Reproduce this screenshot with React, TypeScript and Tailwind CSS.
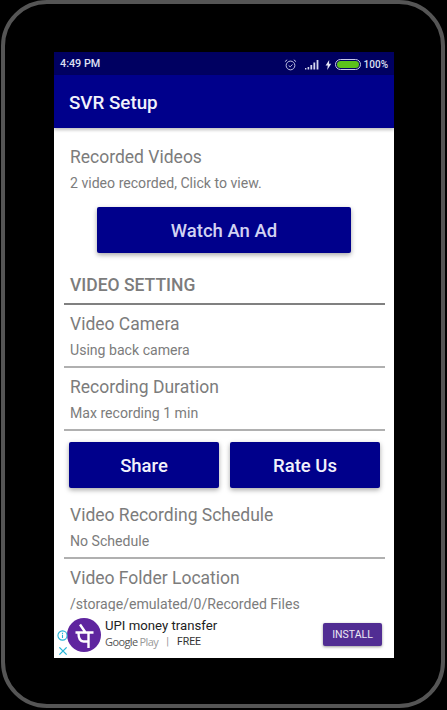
const roboto = "font-['Roboto',sans-serif]"

function StatusIcons() {
    return (
        <div className="flex items-center">
            <svg width="13" height="14" viewBox="0 0 14 14" fill="none" stroke="#c9cbe8" strokeWidth="1">
                <circle cx="7" cy="7.500" r="4.700" />
                <path d="M5 7.500l1.600 1.500 2.600-2.600M1 3.400l2.400-2M13 3.400l-2.400-2" />
            </svg>
            <svg className="ml-[8px]" width="15" height="11" viewBox="0 0 15 11" fill="#d4d6ee">
                <rect x="0" y="9" width="1.400" height="1.500" />
                <rect x="2.600" y="8" width="1.600" height="2.500" />
                <rect x="5.400" y="6" width="1.800" height="4.500" />
                <rect x="8.400" y="3.500" width="1.800" height="7" />
                <rect x="11.600" y="1" width="1.800" height="9.500" />
            </svg>
            <svg className="ml-[5px]" width="7" height="10" viewBox="0 0 7 10" fill="#e4e5f5">
                <path d="M4.200 0L.6 5.600h2.200L2.200 10l4-6.200H4z" />
            </svg>
            <div className="ml-[3px] w-[26px] h-[11px] rounded-full border border-[#c9cbe8] p-[1px]">
                <div className="w-full h-full rounded-full bg-[#5cc21c]" />
            </div>
            <span className="ml-[3px] text-[10px] font-medium text-[#dfe0f3]">100%</span>
        </div>
    )
}

function SettingRow({ title, sub, line }: { title: string; sub: string; line?: boolean }) {
    return (
        <div className={line ? "border-b-2 border-[#b0b0b0] ml-[10px] mr-[9px] h-[63px]" : "ml-[10px] mr-[9px] h-[63px]"}>
            <div className="pl-[6px] pt-[6px] text-[17.500px] leading-[26px] text-[#7c7c7c]">{title}</div>
            <div className="pl-[6px] mt-[1px] text-[14.100px] leading-[24px] text-[#7c7c7c]">{sub}</div>
        </div>
    )
}

function PrimaryButton({ label, className }: { label: string; className: string }) {
    return (
        <button className={`h-[46px] pt-[3px] rounded-[2px] bg-[#00008b] text-[18.500px] font-medium shadow-[0_2px_5px_rgba(0,0,0,0.35)] ${className}`}>
            {label}
        </button>
    )
}

function PhonePeLogo() {
    return (
        <svg width="34" height="34" viewBox="0 0 34 34" className="shrink-0">
            <circle cx="17" cy="17" r="17" fill="#5f259f" />
            <path d="M8.500 14.500h18M21.500 14.500V30M11.500 15c0 6 1.500 8.500 5 8.500h5M13 6.500l5.500 8" fill="none" stroke="#fff" strokeWidth="2.400" />
        </svg>
    )
}

function AdBanner() {
    return (
        <div className="relative shrink-0 h-[47px] bg-white flex items-center pl-[13px]">
            <div className="absolute z-10 left-[3px] top-[19px] flex flex-col items-center">
                <svg width="11" height="11" viewBox="0 0 12 12" fill="none" stroke="#29b6d8" strokeWidth="1.200">
                    <circle cx="6" cy="6" r="5" />
                    <path d="M6 5.200v3.600M6 3v1.300" />
                </svg>
                <svg className="mt-[5px]" width="10" height="10" viewBox="0 0 11 11" fill="none" stroke="#29b6d8" strokeWidth="1.500">
                    <path d="M1.500 1.500l8 8M9.500 1.500l-8 8" />
                </svg>
            </div>
            <PhonePeLogo />
            <div className="ml-[4px] flex-1 -mt-[3px]">
                <div className="text-[13.200px] leading-[18px] text-[#222]">UPI money transfer</div>
                <div className="flex items-center text-[11px] leading-[14px] text-[#444]">
                    <span className="font-['Open_Sans',sans-serif] text-[#555] tracking-[-0.6px]">Google</span>
                    <span className="ml-[2px] font-['Open_Sans',sans-serif] text-[#999] tracking-[-0.6px]">Play</span>
                    <span className="ml-[8px] text-[#999]">|</span>
                    <span className="ml-[8px] text-[10.500px] text-[#333]">FREE</span>
                </div>
            </div>
            <button className="mr-[12px] w-[59px] h-[23px] rounded-[2px] bg-[#512d93] text-[#ece8f5] text-[10.500px] shadow-[0_1px_3px_rgba(0,0,0,0.4)]">
                INSTALL
            </button>
        </div>
    )
}

export default function App() {
    return (
        <div className={`w-[447px] h-[710px] bg-black overflow-hidden ${roboto}`}>
            <div className="ml-[1px] mr-[2px] h-[708px] rounded-[46px] border-[4px] border-[#555555] px-[49px] pt-[48px]">
                <div className="h-[606px] w-[340px] flex flex-col bg-white overflow-hidden">
                    <div className="shrink-0 h-[23px] bg-[#000061] flex items-center justify-between pt-[2px] pl-[6px] pr-[6px] text-white">
                        <span className="text-[10.800px] font-medium text-[#dfe0f3]">4:49 PM</span>
                        <StatusIcons />
                    </div>
                    <div className="shrink-0 h-[53px] pt-[3px] bg-[#00008b] flex items-center pl-[15px] text-[18.800px] font-medium text-[#f2f2fb] shadow-[0_2px_3px_rgba(0,0,0,0.25)] relative">
                        SVR Setup
                    </div>
                    <div className="flex-1 min-h-0 overflow-hidden">
                        <div className="pl-[16px] pt-[16px] text-[17.500px] leading-[26px] text-[#7c7c7c]">Recorded Videos</div>
                        <div className="pl-[16px] mt-[1px] text-[14.100px] leading-[24px] text-[#7c7c7c]">2 video recorded, Click to view.</div>
                        <div className="mt-[12px] flex justify-center">
                            <PrimaryButton label="Watch An Ad" className="w-[254px] text-[#d2d3f2]" />
                        </div>
                        <div className="ml-[10px] mr-[9px] mt-[18px] h-[34px] border-b-2 border-[#808080] pl-[6px] text-[17.500px] leading-[28px] font-medium text-[#7c7c7c]">
                            VIDEO SETTING
                        </div>
                        <SettingRow title="Video Camera" sub="Using back camera" line />
                        <SettingRow title="Recording Duration" sub="Max recording 1 min" line />
                        <div className="flex gap-[11px] pl-[15px] mt-[11px] mb-[8px]">
                            <PrimaryButton label="Share" className="w-[150px] text-[#f2f2fb]" />
                            <PrimaryButton label="Rate Us" className="w-[150px] text-[#f2f2fb]" />
                        </div>
                        <SettingRow title="Video Recording Schedule" sub="No Schedule" line />
                        <SettingRow title="Video Folder Location" sub="/storage/emulated/0/Recorded Files" />
                    </div>
                    <AdBanner />
                </div>
            </div>
        </div>
    )
}
